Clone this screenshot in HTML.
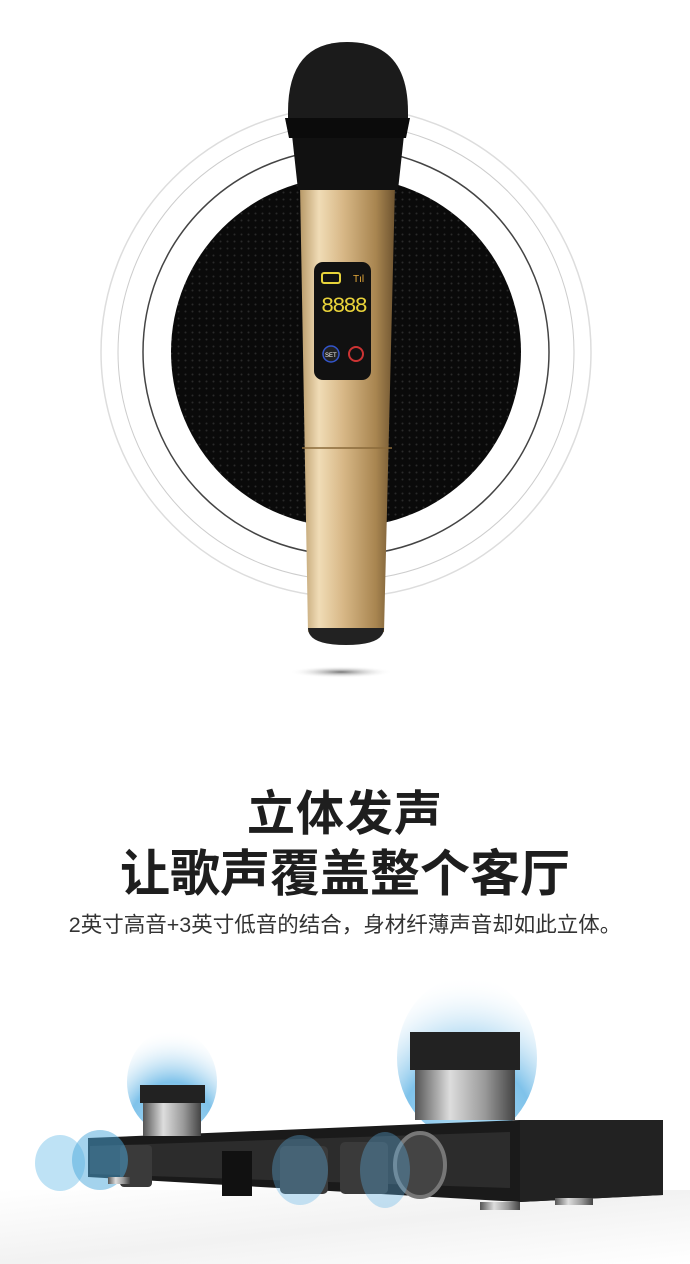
<!DOCTYPE html>
<html><head><meta charset="utf-8"><style>
body{margin:0;width:690px;height:1264px;background:#fff;overflow:hidden;position:relative;font-family:"Liberation Sans","Noto Sans CJK SC",sans-serif}
.a{position:absolute}
.t{position:absolute;left:0;width:690px;text-align:center;color:#1e1e1e}
</style></head><body>
<svg class="a" style="left:0;top:0" width="690" height="720">
<defs>
<pattern id="dots" width="7" height="7" patternUnits="userSpaceOnUse"><rect width="7" height="7" fill="#0a0a0a"/><circle cx="3.5" cy="3.5" r="1" fill="#2a2a2a"/></pattern>
<linearGradient id="gold" x1="0" x2="1"><stop offset="0" stop-color="#b89968"/><stop offset=".2" stop-color="#f0dcb6"/><stop offset=".45" stop-color="#d8b887"/><stop offset=".8" stop-color="#a88550"/><stop offset="1" stop-color="#6e5430"/></linearGradient>
<radialGradient id="sh"><stop offset="0" stop-color="#777"/><stop offset="1" stop-color="#fff" stop-opacity="0"/></radialGradient>
</defs>
<circle cx="346" cy="352" r="245" fill="none" stroke="#ddd" stroke-width="1.5"/>
<circle cx="346" cy="352" r="228" fill="none" stroke="#ccc" stroke-width="1"/>
<circle cx="346" cy="352" r="203" fill="none" stroke="#444" stroke-width="1.5"/>
<circle cx="346" cy="352" r="175" fill="url(#dots)"/>
<ellipse cx="341" cy="672" rx="52" ry="6" fill="url(#sh)"/>
<path d="M300 185 L395 185 L384 632 L308 632 Z" fill="url(#gold)"/>
<line x1="302" y1="448" x2="392" y2="448" stroke="#8a6a3a" stroke-width="1.5"/>
<path d="M308 628 L384 628 Q384 645 346 645 Q308 645 308 628Z" fill="#222"/>
<path d="M292 135 L404 135 L398 190 L298 190 Z" fill="#111"/>
<path d="M288 112 Q288 42 347 42 Q408 42 408 112 L408 118 L288 118Z" fill="#1b1b1b"/>
<path d="M285 118 L410 118 L406 138 L289 138Z" fill="#0b0b0b"/>
<rect x="314" y="262" width="57" height="118" rx="9" fill="#111"/>
<rect x="322" y="273" width="18" height="10" rx="2" fill="none" stroke="#e6d23a" stroke-width="2"/>
<text x="353" y="282" font-size="10" fill="#e6a93a" font-family="Liberation Sans">Tıl</text>
<text x="321" y="312" font-size="22" fill="#e8d23a" font-family="Liberation Mono" letter-spacing="-2">8888</text>
<circle cx="331" cy="354" r="8" fill="#222" stroke="#3355cc" stroke-width="1.5"/>
<text x="325" y="357" font-size="6" fill="#fff">SET</text>
<circle cx="356" cy="354" r="7" fill="none" stroke="#cc3333" stroke-width="2"/>
</svg>
<div class="t" style="top:774px;font-size:48px;font-weight:bold;letter-spacing:1px">立体发声</div>
<div class="t" style="top:834px;font-size:50px;font-weight:bold;letter-spacing:0px">让歌声覆盖整个客厅</div>
<div class="t" style="top:908px;font-size:21.5px;color:#333">2英寸高音+3英寸低音的结合，身材纤薄声音却如此立体。</div>
<svg class="a" style="left:0;top:960px" width="690" height="304">
<defs>
<radialGradient id="wave" cx="50%" cy="100%" r="100%"><stop offset="0" stop-color="#9fd4f0"/><stop offset=".5" stop-color="#5fb3e5"/><stop offset="1" stop-color="#fff" stop-opacity="0"/></radialGradient>
<linearGradient id="metal" x1="0" x2="1"><stop offset="0" stop-color="#555"/><stop offset=".35" stop-color="#ddd"/><stop offset=".7" stop-color="#999"/><stop offset="1" stop-color="#444"/></linearGradient>
<linearGradient id="floor" y1="0" y2="1"><stop offset="0" stop-color="#fff"/><stop offset=".5" stop-color="#f2f2f2"/><stop offset="1" stop-color="#fff"/></linearGradient>
</defs>
<rect x="0" y="230" width="690" height="74" fill="url(#floor)"/>
<ellipse cx="467" cy="98" rx="70" ry="82" fill="url(#wave)" opacity=".8"/>
<ellipse cx="172" cy="122" rx="45" ry="52" fill="url(#wave)" opacity=".8"/>
<path d="M88 178 L520 160 L663 160 L663 235 L520 242 L88 217Z" fill="#1a1a1a"/>
<path d="M520 160 L663 160 L663 235 L520 242Z" fill="#222"/>
<path d="M90 186 L510 172 L510 228 L90 214Z" fill="#2c2c2c"/>
<rect x="222" y="191" width="30" height="45" fill="#111"/>
<rect x="280" y="186" width="48" height="48" rx="5" fill="#3a3a3a"/>
<rect x="340" y="182" width="48" height="52" rx="5" fill="#3a3a3a"/>
<ellipse cx="420" cy="205" rx="25" ry="32" fill="#444" stroke="#777" stroke-width="4"/>
<rect x="120" y="185" width="32" height="42" rx="4" fill="#3a3a3a"/>
<ellipse cx="60" cy="203" rx="25" ry="28" fill="#6fbfe8" opacity=".45"/>
<ellipse cx="100" cy="200" rx="28" ry="30" fill="#4aa8dc" opacity=".5"/>
<ellipse cx="300" cy="210" rx="28" ry="35" fill="#5fb3e5" opacity=".35"/>
<ellipse cx="385" cy="210" rx="25" ry="38" fill="#5fb3e5" opacity=".35"/>
<rect x="140" y="125" width="65" height="18" fill="#222"/>
<rect x="143" y="143" width="58" height="33" fill="url(#metal)"/>
<rect x="410" y="72" width="110" height="38" fill="#222"/>
<rect x="415" y="110" width="100" height="50" fill="url(#metal)"/>
<rect x="480" y="242" width="40" height="8" fill="url(#metal)"/>
<rect x="555" y="238" width="38" height="7" fill="url(#metal)"/>
<rect x="108" y="217" width="22" height="7" fill="url(#metal)"/>
</svg>
</body></html>
